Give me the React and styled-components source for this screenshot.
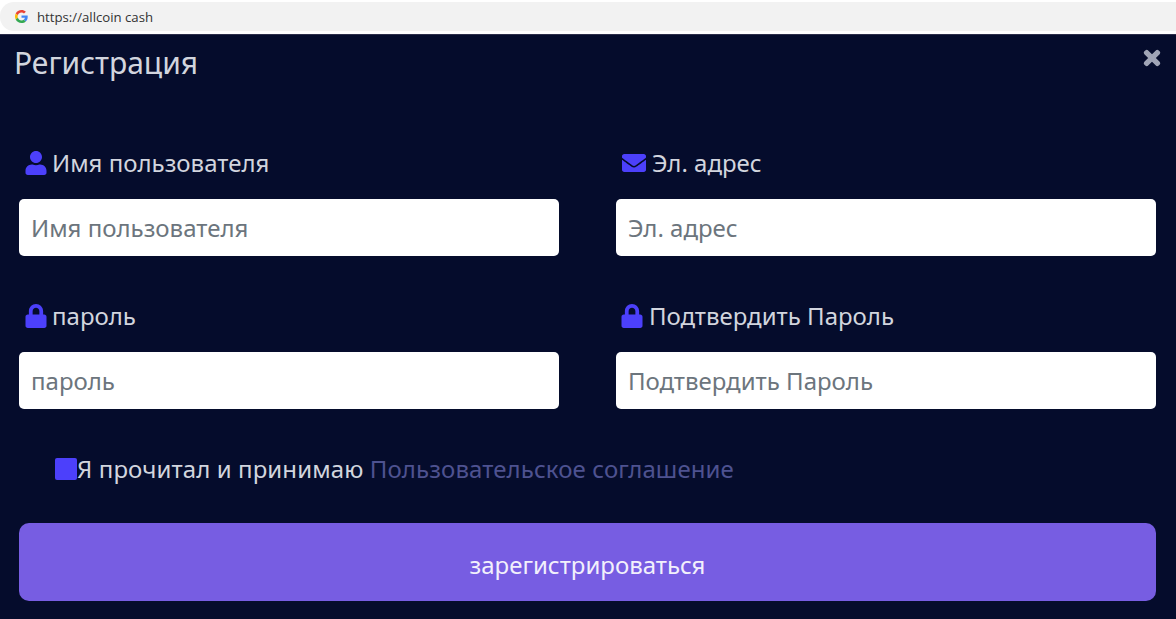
import React from "react";
import styled, { createGlobalStyle } from "styled-components";
import { FaUser, FaEnvelope, FaLock, FaTimes } from "react-icons/fa";

const GlobalStyle = createGlobalStyle`
  html, body {
    margin: 0;
    padding: 0;
    background: #ffffff;
    overflow: hidden;
  }
  * {
    box-sizing: border-box;
  }
`;

const Page = styled.div`
  width: 1176px;
  height: 619px;
  display: flex;
  flex-direction: column;
  font-family: "Noto Sans", "Open Sans", sans-serif;
`;

const AddressBar = styled.div`
  height: 35px;
  flex: none;
  padding: 2px 0 3px;
  background: #ffffff;
  border-bottom: 1px solid #2b2d4a;
`;

const AddressField = styled.div`
  height: 29px;
  display: flex;
  align-items: center;
  gap: 9px;
  padding-left: 15px;
  background: #f2f2f2;
  border-radius: 14px 0 0 14px;
  font-family: "Open Sans", sans-serif;
  font-size: 13.2px;
  color: #333333;
`;

const Modal = styled.div`
  flex: 1;
  background: #050c2c;
  display: flex;
  flex-direction: column;
  padding: 0 20px 18px 19px;
`;

const Header = styled.div`
  height: 88px;
  flex: none;
  margin-left: -5px;
  margin-right: -20px;
  padding-right: 13px;
  display: flex;
  justify-content: space-between;
  align-items: flex-start;
`;

const Title = styled.h1`
  margin: 7px 0 0;
  font-size: 30px;
  line-height: 42px;
  font-weight: 400;
  color: #d2d5de;
`;

const CloseButton = styled.span`
  display: flex;
  margin-top: 12px;
  color: #a0a5b6;
  font-size: 22px;

  svg {
    stroke: currentColor;
    stroke-width: 30px;
  }
`;

const FieldGrid = styled.div`
  display: grid;
  grid-template-columns: 540px 540px;
  column-gap: 57px;
  row-gap: 20px;
`;

const Field = styled.div`
  display: flex;
  flex-direction: column;
`;

const Label = styled.label`
  height: 76px;
  padding: 23px 0 0 ${(p) => p.$inset}px;
  display: flex;
  align-items: flex-start;
  gap: ${(p) => p.$gap}px;
  font-size: 24px;
  line-height: 34px;
  color: #d2d5de;
`;

const IconSlot = styled.span`
  display: flex;
  align-items: center;
  height: 34px;
  color: #4c40fb;
  font-size: 24px;
`;

const Input = styled.input`
  width: 100%;
  height: 57px;
  padding: 0 12px;
  border: none;
  border-radius: 5px;
  background: #ffffff;
  font-family: inherit;
  font-size: 24px;
  color: #333333;
  outline: none;

  &::placeholder {
    color: #6c757d;
    opacity: 1;
  }
`;

const AgreementRow = styled.div`
  margin-top: 41px;
  padding-left: 36px;
  height: 36px;
  display: flex;
  align-items: center;
  font-size: 24px;
  letter-spacing: 0.1px;
  color: #d2d5de;
  white-space: pre;
`;

const CheckSquare = styled.span`
  width: 22px;
  height: 22px;
  flex: none;
  margin-top: 2px;
  background: #4c40fb;
  border-radius: 2px;
`;

const AgreementLink = styled.a`
  color: #4e5290;
  text-decoration: none;
`;

const SubmitButton = styled.button`
  margin-top: 37px;
  width: 1137px;
  height: 78px;
  flex: none;
  padding: 4px 0 0;
  border: none;
  border-radius: 10px;
  background: #775de2;
  color: #f2f0fc;
  font-family: inherit;
  font-size: 24px;
`;

const GoogleIcon = () => (
  <svg width="13" height="13" viewBox="0 0 48 48">
    <path fill="#EA4335" d="M24 9.5c3.5 0 6.700 1.200 9.200 3.600l6.900-6.900C35.900 2.400 30.500 0 24 0 14.600 0 6.500 5.400 2.600 13.200l8 6.200C12.500 13.600 17.800 9.500 24 9.500z" />
    <path fill="#4285F4" d="M46.900 24.500c0-1.600-.1-3.100-.4-4.500H24v9h12.900c-.6 3-2.200 5.500-4.700 7.200l7.700 6c4.500-4.200 7-10.300 7-17.700z" />
    <path fill="#FBBC05" d="M10.500 28.600c-.5-1.500-.8-3-.8-4.600s.3-3.100.8-4.600l-8-6.200C.9 16.500 0 20.100 0 24s.9 7.500 2.600 10.800l7.900-6.200z" />
    <path fill="#34A853" d="M24 48c6.500 0 11.900-2.100 15.900-5.800l-7.700-6c-2.100 1.400-4.900 2.300-8.200 2.300-6.200 0-11.500-4.100-13.400-9.900l-8 6.200C6.500 42.600 14.600 48 24 48z" />
  </svg>
);

const fields = [
  { name: "Имя пользователя", icon: <FaUser />, inset: 5, gap: 4 },
  { name: "Эл. адрес", icon: <FaEnvelope />, inset: 6, gap: 6 },
  { name: "пароль", icon: <FaLock />, inset: 5, gap: 4 },
  { name: "Подтвердить Пароль", icon: <FaLock />, inset: 4, gap: 5 },
];

const App = () => (
  <Page>
    <GlobalStyle />
    <AddressBar>
      <AddressField>
        <GoogleIcon />
        <span>https://allcoin cash</span>
      </AddressField>
    </AddressBar>
    <Modal>
      <Header>
        <Title>Регистрация</Title>
        <CloseButton>
          <FaTimes />
        </CloseButton>
      </Header>
      <FieldGrid>
        {fields.map((field) => (
          <Field key={field.name}>
            <Label $inset={field.inset} $gap={field.gap}>
              <IconSlot>{field.icon}</IconSlot>
              {field.name}
            </Label>
            <Input placeholder={field.name} />
          </Field>
        ))}
      </FieldGrid>
      <AgreementRow>
        <CheckSquare />
        Я прочитал и принимаю <AgreementLink>Пользовательское соглашение</AgreementLink>
      </AgreementRow>
      <SubmitButton>зарегистрироваться</SubmitButton>
    </Modal>
  </Page>
);

export default App;
